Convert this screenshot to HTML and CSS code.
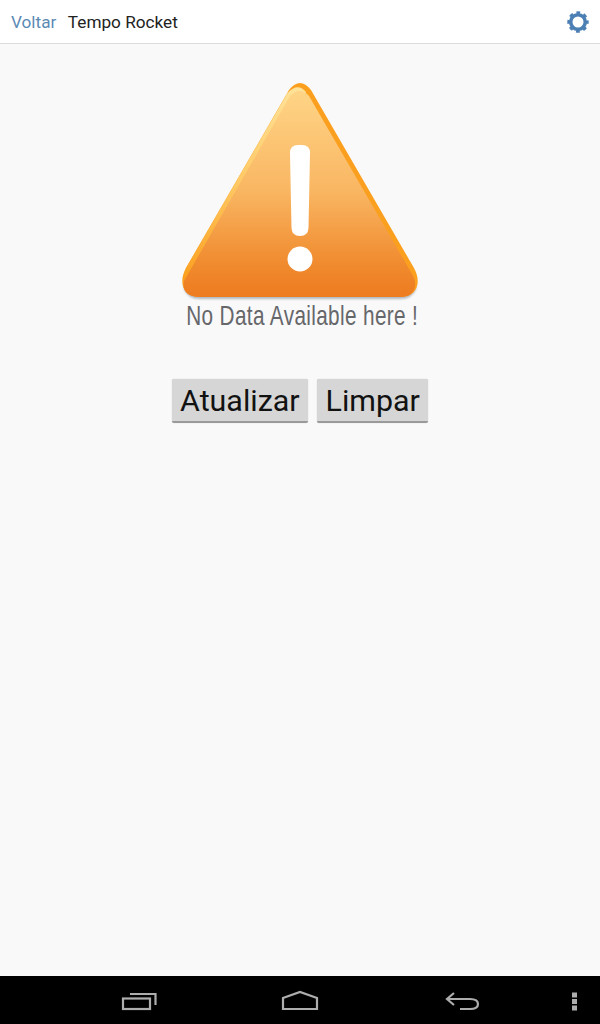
FILE: index.html
```html
<!DOCTYPE html>
<html>
<head>
<meta http-equiv="Content-Type" content="text/html; charset=utf-8">
<title>Tempo Rocket</title>
<link rel="stylesheet" href="styles.css">
</head>
<body>
<div class="topbar">
  <a class="back">Voltar</a>
  <span class="title">Tempo Rocket</span>
  <svg class="gear" width="24" height="24" viewBox="0 0 24 24">
    <circle cx="12" cy="12" r="7.3" fill="none" stroke="#4c7fb4" stroke-width="3.6"/>
    <circle cx="12" cy="12" r="9.4" fill="none" stroke="#4c7fb4" stroke-width="2.6" stroke-dasharray="3.8 3.58" stroke-dashoffset="1.9"/>
  </svg>
</div>

<div class="content">
  <svg class="warn" width="240" height="222" viewBox="180 80 240 222">
    <defs>
      <linearGradient id="fillgrad" gradientUnits="userSpaceOnUse" x1="0" y1="85" x2="0" y2="297">
        <stop offset="0" stop-color="#ffd688"/>
        <stop offset="0.5" stop-color="#f9b662"/>
        <stop offset="0.85" stop-color="#f08a2e"/>
        <stop offset="1" stop-color="#ee7b1f"/>
      </linearGradient>
      <linearGradient id="lightgrad" gradientUnits="userSpaceOnUse" x1="0" y1="85" x2="0" y2="280">
        <stop offset="0" stop-color="#ffe39a"/>
        <stop offset="0.5" stop-color="#ffc964"/>
        <stop offset="1" stop-color="#fb9f1e"/>
      </linearGradient>
      <filter id="soft" x="-10%" y="-30%" width="120%" height="160%">
        <feGaussianBlur stdDeviation="1.2"/>
      </filter>
    </defs>
    <path d="M200 299 H400 Q412 299 416 289 V284 H184 V289 Q188 299 200 299 Z" fill="#7f8a96" opacity="0.6" filter="url(#soft)"/>
    <path d="M289 90 Q300 76 311 90 L414 268 C421 280 419 297 400 297 H200 C181 297 179 280 186 268 Z" fill="#fb9f1e"/>
    <path d="M287.500 93 Q298 82 306 92 L300 110 L190 280 L184 282 Q183 275 186 268 Z" fill="url(#lightgrad)"/>
    <path d="M290 96 Q300 86 309 96 L412 274 C418 284 416 297 400 297 H200 C186 297 182 290 184 281 Z" fill="url(#fillgrad)"/>
    <path d="M290 153 Q290 145 298 145 H302 Q310 145 310 153 L308.500 228 Q308 236 300 236 Q292 236 291.500 228 Z" fill="#fff"/>
    <circle cx="300" cy="259" r="12.500" fill="#fff"/>
  </svg>
  <div class="nodata">No Data Available here !</div>
  <div class="btnrow">
    <button class="btn">Atualizar</button>
    <button class="btn">Limpar</button>
  </div>
</div>

<div class="navbar">
  <svg width="600" height="48" viewBox="0 976 600 48" fill="none" stroke="#adadad" stroke-width="2.2">
    <rect x="123" y="998.500" width="27" height="10.500"/>
    <path d="M130 994 H155.500 V1005"/>
    <path d="M283 1009 V998 L300 992 L317 998 V1009 Z"/>
    <path d="M447 999 H470 Q478 999 478 1004 Q478 1009 470 1009 H460"/>
    <path d="M454 993 L447 999 L454 1005"/>
    <g fill="#adadad" stroke="none">
      <rect x="572" y="992.500" width="5" height="5"/>
      <rect x="572" y="999" width="5" height="5"/>
      <rect x="572" y="1005.500" width="5" height="5"/>
    </g>
  </svg>
</div>
</body>
</html>
```

FILE: styles.css
```css
html, body {
	margin: 0;
	padding: 0;
}
body {
	display: flex;
	flex-direction: column;
	height: 1024px;
	background: #f9f9f9;
	font-family: Roboto, "Liberation Sans", sans-serif;
	overflow: hidden;
}
.topbar {
	display: flex;
	align-items: center;
	height: 43px;
	padding: 0 10px 0 11px;
	background: #ffffff;
	border-bottom: 1px solid #dcdcdc;
	font-size: 17.2px;
}
.back {
	color: #5b8ab5;
}
.title {
	margin-left: 11.500px;
	color: #222222;
}
.gear {
	margin-left: auto;
}
.content {
	flex: 1;
	display: flex;
	flex-direction: column;
	align-items: center;
	padding-top: 36px;
}
.warn {
	display: block;
}
.nodata {
	margin-top: -1px;
	height: 30px;
	line-height: 30px;
	font-family: "Liberation Sans", sans-serif;
	font-size: 28px;
	letter-spacing: 0.5px;
	white-space: nowrap;
	color: #66676a;
	transform: translateX(2.500px) scaleX(0.74);
}
.btnrow {
	display: flex;
	gap: 9px;
	margin-top: 48px;
}
.btn {
	height: 44px;
	padding: 0 8.500px;
	background: #d6d6d6;
	border: 0;
	border-bottom: 2px solid #9a9a9a;
	border-radius: 2px;
	box-shadow: 0 0 1px #b8b8b8;
	font-family: Roboto, sans-serif;
	font-size: 30.400px;
	color: #111111;
}
.navbar {
	height: 48px;
	background: #000000;
}
.navbar svg {
	display: block;
}
```
